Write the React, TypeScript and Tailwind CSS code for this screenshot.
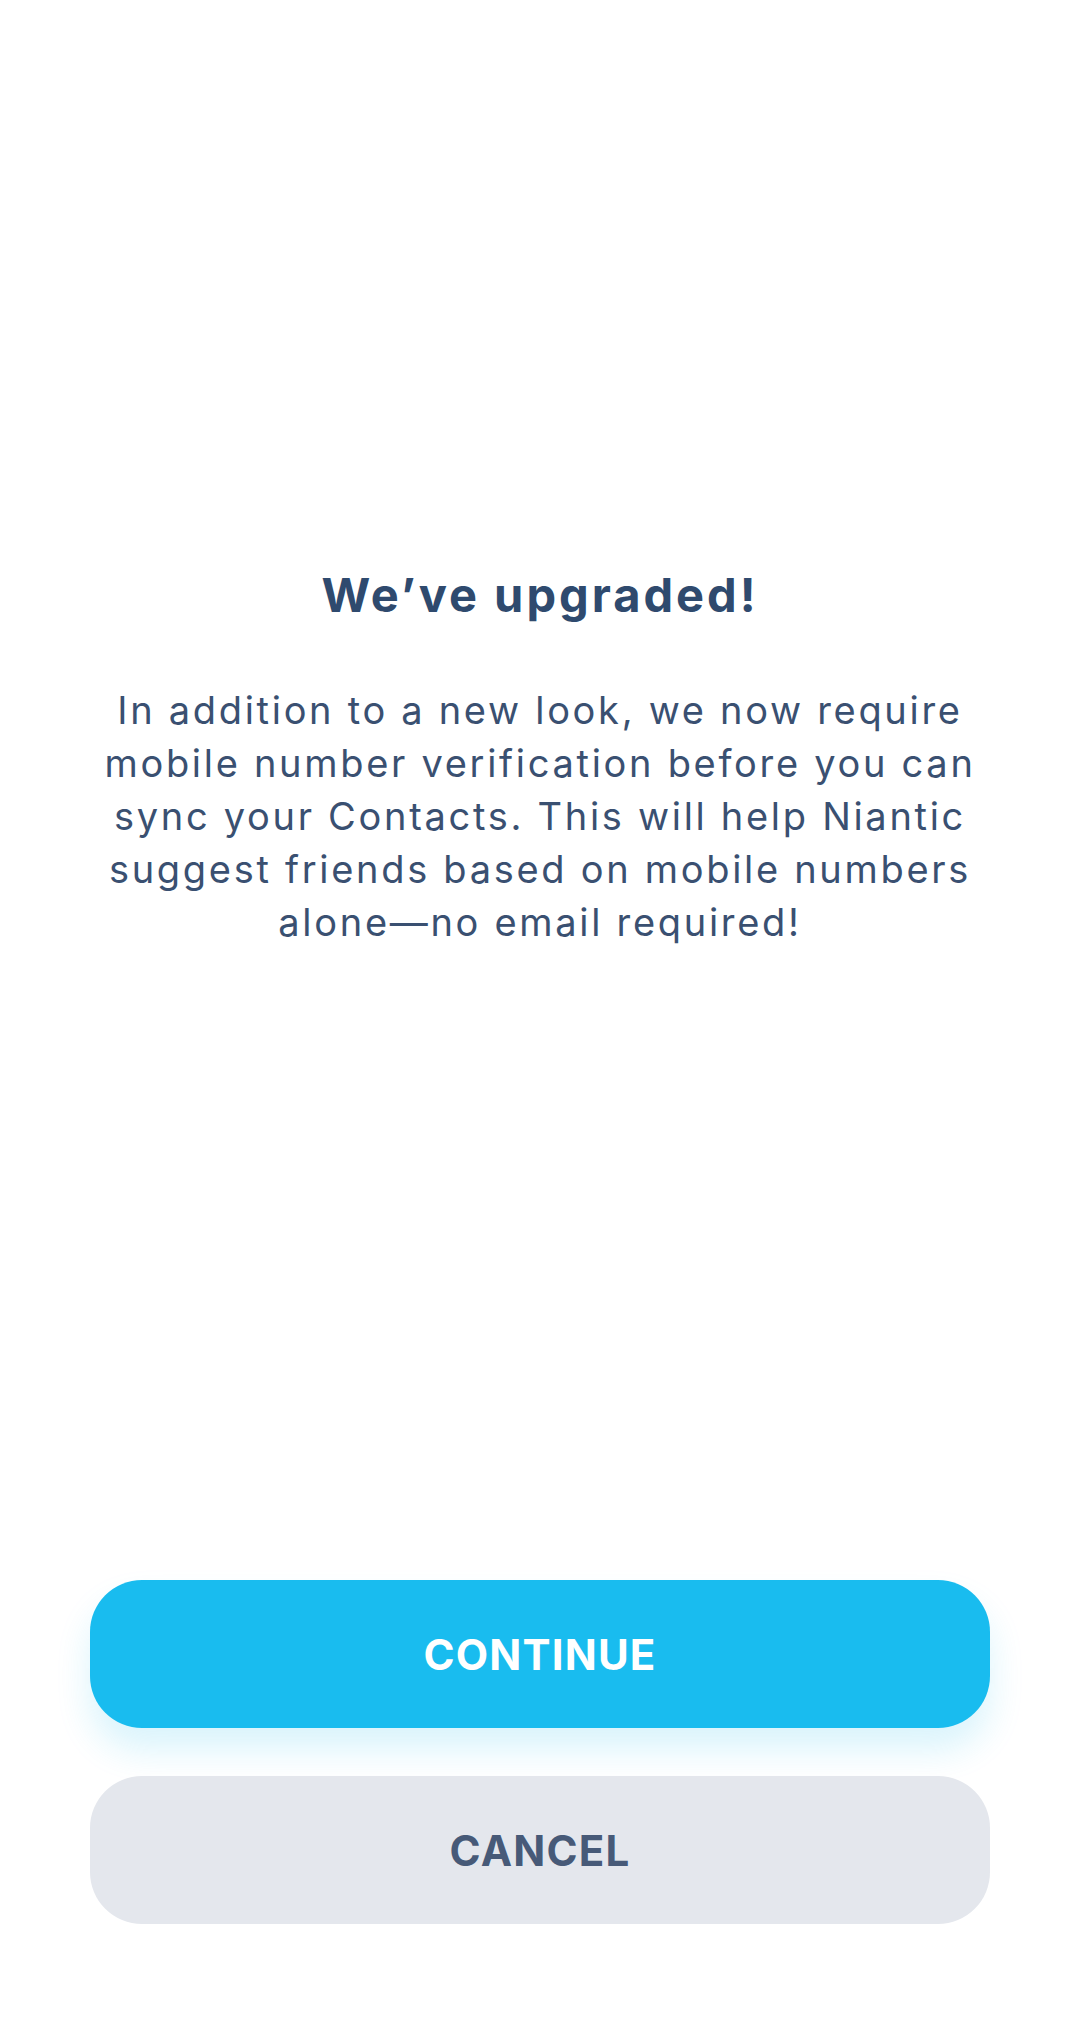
import React from "react";

export default function App() {
  const lines = [
    "In addition to a new look, we now require",
    "mobile number verification before you can",
    "sync your Contacts. This will help Niantic",
    "suggest friends based on mobile numbers",
    "alone\u2014no email required!",
  ];
  return (
    <div
      className="w-full h-[2027px] bg-white flex flex-col items-center"
      style={{ fontFamily: "Inter, 'Noto Sans', sans-serif" }}
    >
      <h1 className="mt-[567px] text-[47px] leading-[56px] font-bold text-[#2f4a6e] tracking-[3px] whitespace-nowrap">
        We’ve upgraded!
      </h1>
      <p className="mt-[61px] text-[38px] leading-[53px] text-[#3a5071] text-center tracking-[2.7px] whitespace-nowrap">
        {lines.map((l, i) => (
          <span key={i} className="block">
            {l}
          </span>
        ))}
      </p>
      <div className="mt-auto mb-[103px] w-full px-[90px] flex flex-col gap-[48px]">
        <button className="h-[148px] w-full rounded-[52px] bg-[#19bcef] text-white text-[42px] font-bold tracking-[1.2px] shadow-[0_22px_34px_rgba(25,188,239,0.16)]">
          CONTINUE
        </button>
        <button className="h-[148px] w-full rounded-[52px] bg-[#e4e7ed] text-[#475a78] text-[42px] font-bold tracking-[1.2px]">
          CANCEL
        </button>
      </div>
    </div>
  );
}
